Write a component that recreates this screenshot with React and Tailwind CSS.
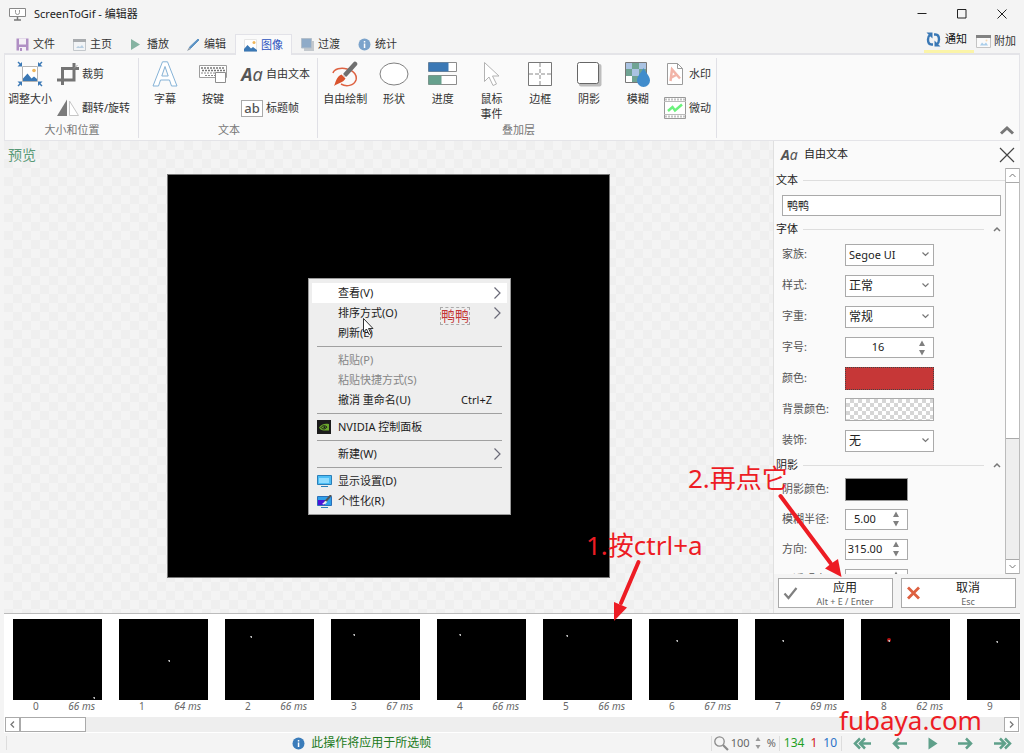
const Svg = ({ w = 24, h = 24, box, className = "", children }) => (
  <svg
    width={w}
    height={h}
    viewBox={box || `0 0 ${w} ${h}`}
    fill="none"
    className={`shrink-0 ${className}`}
    aria-hidden="true"
  >
    {children}
  </svg>
);

/* ---------- tab icons ---------- */

const SaveIcon = () => (
  <Svg w={13} h={13}>
    <path d="M0.5 0.5h12v12h-12z" fill="#b08fc4" />
    <path d="M3 0.5h7v6H3z" fill="#f4f0f6" />
    <path d="M3 9h7v4H3z" fill="#f4f0f6" />
    <path d="M4 10h2v3H4z" fill="#b08fc4" />
  </Svg>
);

const HomeIcon = () => (
  <Svg w={13} h={13}>
    <path d="M0.5 1.5h12v11h-12z" fill="#f2f4f6" stroke="#c4c8cc" />
    <path d="M0 1h13v3H0z" fill="#a8abae" />
    <path d="M3 10l2-2 2 1 2-2 2 3z" fill="#b9cfe2" />
  </Svg>
);

const PlaybackIcon = () => (
  <Svg w={13} h={13}>
    <path d="M1 1l9 5.500-9 5.500z" fill="#86b3a2" />
  </Svg>
);

const PencilIcon = () => (
  <Svg w={13} h={13}>
    <path d="M11 1l1 1-8.500 8.500-1.200-1.200z" fill="#5d93c4" stroke="#5d93c4" />
    <path d="M2 9.500L0 13l3.500-1.800z" fill="#8d9aa6" />
  </Svg>
);

const PictureIcon = () => (
  <Svg w={13} h={13}>
    <path d="M0.500 0.500h12v12h-12z" fill="#fff" stroke="#e6e6e6" />
    <path d="M0 12.500V10l3.500-4 3.500 3.500L9 8l4 3v1.500z" fill="#3a78b5" />
    <circle cx="10" cy="3.500" r="1.500" fill="#f0b65a" />
  </Svg>
);

const TransitionIcon = () => (
  <Svg w={13} h={13}>
    <path d="M3 3h10v10H3z" fill="#c3c8cd" />
    <path d="M0.500 0.500h10v9.500h-10z" fill="#8fabc8" stroke="#b4bfca" />
  </Svg>
);

const InfoIcon = ({ color = "#3b7cba" }) => (
  <Svg w={13} h={13}>
    <circle cx="6.500" cy="6.500" r="6" fill={color} />
    <path d="M5.800 5.500h1.500V10H5.800zM5.800 3h1.500v1.500H5.800z" fill="#fff" />
  </Svg>
);

/* ---------- ribbon icons ---------- */

const ResizeIcon = () => (
  <Svg w={26} h={26}>
    <path d="M5.500 5.500h15v15h-15z" fill="#fff" stroke="#b5b5b5" />
    <path d="M6 20v-2.500l4.500-5 4 5 2.500-2 3 2.500V20z" fill="#3a78b5" />
    <circle cx="17" cy="9.500" r="1.800" fill="#f0b65a" />
    <g fill="#3a78b5">
      <path d="M0.500 1.500l1-1 2 2L5 1v4.500H0.500L2.500 3.500z" />
      <path d="M25.500 1.500l-1-1-2 2L21 1v4.500h4.500l-2-2z" />
      <path d="M0.500 24.500l1 1 2-2L5 25v-4.500H0.500l2 2z" />
      <path d="M25.500 24.500l-1 1-2-2L21 25v-4.500h4.500l-2 2z" />
    </g>
  </Svg>
);

const CropIcon = () => (
  <Svg w={22} h={22}>
    <path d="M5.500 22V5.500H22M0 17h17V0" stroke="#747474" strokeWidth="3" />
    <path d="M17 5.500L20.500 2" stroke="#9a9a9a" />
  </Svg>
);

const FlipIcon = () => (
  <Svg w={22} h={18}>
    <path d="M10 0.500V17H0z" fill="#7b7b7b" />
    <path d="M12.500 2v14.500h9z" stroke="#c6c6c6" fill="#fff" />
  </Svg>
);

const LetterIcon = () => (
  <Svg w={26} h={26}>
    <path
      d="M10.500 0.800h5L25 25h-5.500l-2-6h-9l-2 6H1zM9.800 15h6.400L13 5.500z"
      fill="#fff"
      stroke="#85b2d6"
    />
  </Svg>
);

const KeyboardIcon = () => (
  <Svg w={28} h={26}>
    <path d="M0.500 4.500h27v12h-27z" fill="#fff" stroke="#9d9d9d" />
    <path d="M2 7h24M3 9.500h23" stroke="#777" strokeWidth="1.500" strokeDasharray="2 1" />
    <path d="M2 12h24M6 14.500h11" stroke="#888" strokeDasharray="2 1" />
    <path d="M16.500 11.500h10v10h-10z" fill="#fff" stroke="#8d8d8d" />
  </Svg>
);

const FreeTextIcon = ({ className = "text-[18px]" }) => (
  <span className={`w-[22px] shrink-0 font-bold italic leading-none text-[#555] ${className}`}>
    A<span className="font-normal">a</span>
  </span>
);

const TitleFrameIcon = () => (
  <span className="flex h-[17px] w-[22px] shrink-0 items-center justify-center border border-[#aaa] bg-white text-[13px] leading-none font-medium text-[#555]">
    ab
  </span>
);

const DrawIcon = () => (
  <Svg w={26} h={26}>
    <path
      d="M1 12C2 8 9 6 15 8c8 2 10 7 9 11-2 6-10 7-15 4"
      stroke="#de6242"
      strokeWidth="1.500"
    />
    <path d="M23 3L13.500 13.500" stroke="#6f6f6f" strokeWidth="4.500" strokeLinecap="round" />
    <path d="M9.500 13.500l4 4C11 22 6 22 2 25c2-4 2-9 7.500-11.500z" fill="#d9532d" />
    <path d="M10 12.500l4.500 4.500" stroke="#fff" />
  </Svg>
);

const EllipseIcon = () => (
  <Svg w={30} h={26}>
    <ellipse cx="15" cy="13" rx="14" ry="11" fill="#fff" stroke="#808080" />
  </Svg>
);

const ProgressIcon = () => (
  <Svg w={29} h={26}>
    <path d="M0.500 1.500h28v9h-28zM0.500 14.500h28v9h-28z" fill="#fff" stroke="#8c8c8c" />
    <path d="M0.500 1.500h20v9h-20z" fill="#3a78b5" />
    <path d="M0.500 14.500h13v9h-13z" fill="#66a08d" />
  </Svg>
);

const PointerIcon = () => (
  <Svg w={18} h={26}>
    <path
      d="M1.500 1.500v19l4.500-4.500 4 8.500 3.500-1.500-4-8h6.500z"
      fill="#fff"
      stroke="#b3b3b3"
    />
  </Svg>
);

const BorderIcon = () => (
  <Svg w={26} h={26}>
    <path d="M1.500 1.500h23v23h-23z" fill="#fff" stroke="#777" />
    <path d="M13 2v22M2 13h22" stroke="#888" strokeDasharray="4 2" />
  </Svg>
);

const ShadowIcon = () => (
  <Svg w={26} h={26}>
    <rect x="3" y="3" width="22.500" height="22.500" rx="2" fill="#bdbdbd" />
    <rect x="1.500" y="1.500" width="21" height="21" rx="2" fill="#fff" stroke="#666" />
  </Svg>
);

const BlurIcon = () => (
  <Svg w={26} h={26}>
    <path d="M0.500 1.500h21v20h-21z" fill="#fff" stroke="#777" />
    <path d="M1 2h6v6H1zM14 2h7v6h-7zM7 8h7v7H7z" fill="#aac3e2" />
    <path d="M7 2h7v6H7zM1 8h6v7H1zM7 15h7v6H7zM14 8h7v6h-7z" fill="#6fa393" />
    <path d="M18.500 7c2 4.500 6.500 8 6.500 12.500a6.500 6.500 0 01-13 0C12 15 16.500 11.500 18.500 7z" fill="#408ccc" />
  </Svg>
);

const WatermarkIcon = () => (
  <Svg w={22} h={22}>
    <path d="M3.500 0.500h10l5 5v16h-15z" fill="#fff" stroke="#9b9b9b" />
    <path d="M13.500 0.500v5h5" stroke="#9b9b9b" />
    <path d="M6.500 18L8 6.500l8 9M7.500 14.500l5.500-3" stroke="#f2b4a8" strokeWidth="2.500" />
  </Svg>
);

const CinemagraphIcon = () => (
  <Svg w={22} h={22}>
    <path d="M0.500 0.500h21v21h-21z" fill="#fff" stroke="#999" />
    <path d="M1.500 2.500h19M1.500 19.500h19" stroke="#888" strokeWidth="2" strokeDasharray="1 2" />
    <path d="M0 4.500h22M0 17.500h22" stroke="#bbb" />
    <path d="M4 14l4.500-4 2.500 3.500L18 7.500" stroke="#6bf27c" strokeWidth="2.500" />
  </Svg>
);

/* ---------- window chrome ---------- */

const TitleBar = () => (
  <header className="flex h-7 shrink-0 items-center pl-[9px] pr-[2px]">
    <Svg w={17} h={13}>
      <path d="M0.500 0.500h16v8h-16z" fill="#fff" stroke="#888" />
      <path d="M6.500 2v2.500a2 2 0 004 0V2" stroke="#999" />
      <path d="M8.500 9v3M5 12h7" stroke="#777" strokeWidth="1.500" />
    </Svg>
    <h1 className="ml-2 flex-1 text-[11px] text-[#222]">ScreenToGif - 编辑器</h1>
    <button aria-label="最小化" className="flex h-7 w-10 items-center justify-center">
      <Svg w={10} h={10}>
        <path d="M0.500 4.500h9" stroke="#222" />
      </Svg>
    </button>
    <button aria-label="最大化" className="flex h-7 w-10 items-center justify-center">
      <Svg w={10} h={10}>
        <path d="M0.500 0.500h8.500v8.500H0.500z" stroke="#222" />
      </Svg>
    </button>
    <button aria-label="关闭" className="flex h-7 w-10 items-center justify-center">
      <Svg w={10} h={10}>
        <path d="M0.500 0.500l9 9M9.500 0.500l-9 9" stroke="#222" />
      </Svg>
    </button>
  </header>
);

const tabs = [
  { label: "文件", icon: <SaveIcon /> },
  { label: "主页", icon: <HomeIcon /> },
  { label: "播放", icon: <PlaybackIcon /> },
  { label: "编辑", icon: <PencilIcon /> },
  { label: "图像", icon: <PictureIcon />, active: true },
  { label: "过渡", icon: <TransitionIcon /> },
  { label: "统计", icon: <InfoIcon color="#7ba3cb" /> },
];

const TabBar = () => (
  <nav className="flex h-[25px] shrink-0 items-end pl-[7px] pr-2 text-[11px] text-[#333]">
    {tabs.map((tab) => (
      <button
        key={tab.label}
        className={
          tab.active
            ? "z-10 -mb-[2px] flex h-[21px] w-[57px] items-center justify-center gap-1 border border-b-0 border-[#e2e2e8] bg-[#fafafa] text-[#2a52be]"
            : "flex h-[18px] w-[57px] items-center justify-center gap-1"
        }
      >
        {tab.icon}
        {tab.label}
      </button>
    ))}
    <button className="ml-auto flex h-[25px] w-[50px] items-center gap-1 border-b-[3px] border-[#fbf4a8] pl-[2px] text-[#111]">
      <Svg w={15} h={15}>
        <path
          d="M7 12.500H5.500C3.500 12.500 2 10.500 2 7.500 2 5.500 2.500 4 4 3"
          stroke="#3a78b5"
          strokeWidth="2.400"
        />
        <path
          d="M8 2.500h1.500c2 0 3.500 2 3.500 5 0 2-.500 3.500-2 4.500"
          stroke="#3a78b5"
          strokeWidth="2.400"
        />
        <path d="M0.500 0.500h6v6zM14.500 14.500h-6v-6z" fill="#3a78b5" />
      </Svg>
      通知
    </button>
    <button className="flex h-[23px] items-center gap-[3px] pl-[2px]">
      <Svg w={15} h={15}>
        <path d="M0.500 1.500h14v12h-14z" fill="#fafafa" stroke="#c4c4c4" />
        <path d="M0 1h15v3H0z" fill="#828282" />
        <path d="M4 11.500l2-3 2 2 2-2 2 3z" fill="#a9cdea" />
        <circle cx="10.500" cy="6.500" r="1" fill="#f7d9b0" />
      </Svg>
      附加
    </button>
  </nav>
);

const BigButton = ({ icon, children, className = "w-12" }) => (
  <button className={`flex flex-col items-center gap-1 ${className}`}>
    <span className="flex h-[26px] items-center justify-center">{icon}</span>
    <span className="text-[11px] leading-[15px] whitespace-nowrap">{children}</span>
  </button>
);

const SmallButton = ({ icon, children }) => (
  <button className="flex h-[26px] items-center gap-[3px] text-[11px] whitespace-nowrap">
    <span className="flex w-[22px] justify-center">{icon}</span>
    {children}
  </button>
);

const RibbonGroup = ({ title, className, children }) => (
  <section className={`mt-[3px] mb-[2px] flex flex-col border-r border-[#e0e0e6] ${className}`}>
    <div className="flex flex-1 items-start pt-[3px]">{children}</div>
    <h2 className="text-center text-[11px] leading-4 text-[#777]">{title}</h2>
  </section>
);

const Ribbon = () => (
  <div className="mx-1 flex h-[88px] shrink-0 border border-t-2 border-[#e4e4e8] bg-[#fafafa] text-[#333]">
    <RibbonGroup title="大小和位置" className="w-[134px] pl-px">
      <BigButton icon={<ResizeIcon />}>调整大小</BigButton>
      <div className="ml-[3px] flex flex-col gap-2">
        <SmallButton icon={<CropIcon />}>裁剪</SmallButton>
        <SmallButton icon={<FlipIcon />}>翻转/旋转</SmallButton>
      </div>
    </RibbonGroup>
    <RibbonGroup title="文本" className="w-[179px] pl-[2px]">
      <BigButton icon={<LetterIcon />}>字幕</BigButton>
      <BigButton icon={<KeyboardIcon />}>按键</BigButton>
      <div className="ml-1 flex flex-col gap-2">
        <SmallButton icon={<FreeTextIcon />}>自由文本</SmallButton>
        <SmallButton icon={<TitleFrameIcon />}>标题帧</SmallButton>
      </div>
    </RibbonGroup>
    <RibbonGroup title="叠加层" className="w-[399px] pl-[3px]">
      <BigButton className="flex-1" icon={<DrawIcon />}>自由绘制</BigButton>
      <BigButton className="flex-1" icon={<EllipseIcon />}>形状</BigButton>
      <BigButton className="flex-1" icon={<ProgressIcon />}>进度</BigButton>
      <BigButton className="flex-1" icon={<PointerIcon />}>
        鼠标
        <br />
        事件
      </BigButton>
      <BigButton className="flex-1" icon={<BorderIcon />}>边框</BigButton>
      <BigButton className="flex-1" icon={<ShadowIcon />}>阴影</BigButton>
      <BigButton className="flex-1" icon={<BlurIcon />}>模糊</BigButton>
      <div className="mr-[5px] ml-[2px] flex flex-col gap-2">
        <SmallButton icon={<WatermarkIcon />}>水印</SmallButton>
        <SmallButton icon={<CinemagraphIcon />}>微动</SmallButton>
      </div>
    </RibbonGroup>
    <button aria-label="折叠功能区" className="mt-auto mr-[3px] mb-1 ml-auto p-px">
      <Svg w={16} h={10}>
        <path d="M2 8.500l6-5.500 6 5.500" stroke="#777" strokeWidth="3" />
      </Svg>
    </button>
  </div>
);

/* ---------- preview ---------- */

const Separator = () => (
  <li role="separator" className="flex h-[7px] items-center px-[5px]">
    <span className="h-px w-full bg-[#a0a0a0]" />
  </li>
);

const MenuItem = ({ icon, shortcut, submenu, disabled, hover, children }) => (
  <li>
    <button
      disabled={disabled}
      className={`flex h-5 w-full items-center pr-[5px] pl-[5px] text-left text-[11px] ${
        hover ? "bg-white" : ""
      } ${disabled ? "text-[#868686]" : "text-[#1c1c1c]"}`}
    >
      <span className="w-[21px] shrink-0">{icon}</span>
      <span className="flex-1">{children}</span>
      {shortcut && <span className="mr-[10px]">{shortcut}</span>}
      {submenu && (
        <Svg w={8} h={12}>
          <path d="M0.500 0.500l5.500 5.500-5.500 5.500" stroke="#6a6a78" strokeWidth="1.200" />
        </Svg>
      )}
    </button>
  </li>
);

const ContextMenu = () => (
  <ul className="absolute top-[103px] left-[140px] w-[203px] border border-[#9a9a9a] bg-[#eee] px-[3px] pt-1 pb-[3px]">
    <MenuItem hover submenu>查看(V)</MenuItem>
    <MenuItem submenu>排序方式(O)</MenuItem>
    <MenuItem>刷新(E)</MenuItem>
    <Separator />
    <MenuItem disabled>粘贴(P)</MenuItem>
    <MenuItem disabled>粘贴快捷方式(S)</MenuItem>
    <MenuItem shortcut="Ctrl+Z">撤消 重命名(U)</MenuItem>
    <Separator />
    <MenuItem
      icon={
        <Svg w={14} h={14}>
          <path d="M0 0h14v14H0z" fill="#1b1b1b" />
          <path d="M2 7.500C4 4 8 3 12 4v6.500H7C4.500 10.500 3 9.500 2 7.500z" fill="#6aa82c" />
          <path d="M4 7.500c1.500-2 4-2.500 6-.500-1.500 2.500-4.500 2.500-6 .500z" stroke="#1b1b1b" />
          <circle cx="7.500" cy="7.300" r="1" fill="#1b1b1b" />
        </Svg>
      }
    >
      NVIDIA 控制面板
    </MenuItem>
    <Separator />
    <MenuItem submenu>新建(W)</MenuItem>
    <Separator />
    <MenuItem
      icon={
        <Svg w={15} h={12}>
          <path d="M0.500 0.500h14v9h-14z" fill="#4cbdf5" stroke="#2b7fb8" />
          <path d="M2 3h10v5H2z" fill="#8fdcff" />
          <path d="M4 11.500h7" stroke="#2b7fb8" />
        </Svg>
      }
    >
      显示设置(D)
    </MenuItem>
    <MenuItem
      icon={
        <Svg w={15} h={13}>
          <path d="M0.500 1.500h14v9h-14z" fill="#2f9fe8" stroke="#2b6fb8" />
          <path d="M1 5h7v5H1z" fill="#4a12d8" />
          <path d="M14 0L8 7" stroke="#555" strokeWidth="2" />
          <path d="M9 6c-2 0-2 2-4 3 2 1 4 0 5-2z" fill="#eee" />
          <path d="M4 12.500h7" stroke="#2b7fb8" />
        </Svg>
      }
    >
      个性化(R)
    </MenuItem>
  </ul>
);

const Preview = () => (
  <main className="relative flex min-w-0 flex-1 items-center justify-center bg-[repeating-conic-gradient(#f4f4f4_0_25%,#efefef_0_50%)] bg-[length:18px_18px] pb-[2px]">
    <h2 className="absolute top-1 left-1 text-[14px] leading-5 text-[#5a9a78]">预览</h2>
    <div className="relative h-[404px] w-[443px] shrink-0 border border-[#777] bg-black">
      <ContextMenu />
      <span className="absolute top-[132px] left-[272px] border border-dashed border-[#aaa] text-[14px] leading-[16px] text-[#c43636]">
        鸭鸭
      </span>
      <Svg w={12} h={18} className="absolute top-[143px] left-[195px]">
        <path d="M0.500 0.500v13.500l3-3 2.500 5.500 2-1-2.500-5h4.500z" fill="#fff" stroke="#333" />
      </Svg>
    </div>
  </main>
);

/* ---------- free text panel ---------- */

const SectionTitle = ({ children, collapsible }) => (
  <div className="mr-1 flex h-[18px] items-center gap-[5px] pl-[2px]">
    <h3 className="text-[11px] text-[#222]">{children}</h3>
    <span className="h-px flex-1 bg-[#dedede]" />
    {collapsible && (
      <button type="button" aria-label="折叠" className="ml-1 flex">
        <Svg w={8} h={6}>
          <path d="M1 5l3-3 3 3" stroke="#777" strokeWidth="1.500" />
        </Svg>
      </button>
    )}
  </div>
);

const Field = ({ id, label, className = "h-[31px]", children }) => (
  <div className={`flex items-center pl-2 ${className}`}>
    <label htmlFor={id} className="w-[63px] shrink-0 text-[11px] whitespace-nowrap text-[#555]">
      {label}:
    </label>
    {children}
  </div>
);

const Select = ({ id, value, className = "text-[12px]" }) => (
  <div className="relative">
    <select
      id={id}
      className={`block h-[22px] w-[89px] appearance-none border border-[#aaa] bg-white px-[3px] leading-5 text-[#222] ${className}`}
    >
      <option>{value}</option>
    </select>
    <Svg w={7} h={5} className="pointer-events-none absolute top-2 right-[5px]">
      <path d="M0.500 0.500l3 3 3-3" stroke="#777" strokeWidth="1.200" />
    </Svg>
  </div>
);

const Arrows = () => (
  <Svg w={8} h={16}>
    <path d="M4 0.500L7 6H1zM4 15.500L7 10H1z" fill="#808080" />
  </Svg>
);

const Spinner = ({ id, value, className }) => (
  <div className={`flex h-[21px] items-center border border-[#aaa] bg-white pr-[7px] ${className}`}>
    <input
      id={id}
      defaultValue={value}
      className="w-full min-w-0 flex-1 pr-2 text-center text-[11px] text-[#222] outline-none"
    />
    <Arrows />
  </div>
);

const FreeTextPanel = () => (
  <aside className="flex w-[247px] shrink-0 flex-col border-l border-[#e0e0e0] bg-[#fafafa]">
    <div className="flex h-[27px] shrink-0 items-center pr-[5px] pl-[7px]">
      <FreeTextIcon className="text-[14px]" />
      <h2 className="ml-px flex-1 text-[11px] text-[#222]">自由文本</h2>
      <button aria-label="关闭面板" className="flex">
        <Svg w={16} h={16}>
          <path d="M1 1l14 14M15 1L1 15" stroke="#444" strokeWidth="1.200" />
        </Svg>
      </button>
    </div>
    <div className="flex min-h-0 flex-1">
      <form className="min-w-0 flex-1 overflow-hidden pt-[3px]">
        <div className="-mr-1">
          <SectionTitle>文本</SectionTitle>
        </div>
        <input
          aria-label="文本"
          defaultValue="鸭鸭"
          className="mt-[6px] ml-2 h-[21px] w-[219px] border border-[#aaa] bg-white px-1 pb-[2px] text-[11px] text-[#222]"
        />
        <div className="mt-1">
          <SectionTitle collapsible>字体</SectionTitle>
        </div>
        <div className="pt-px">
          <Field id="family" label="家族">
            <Select id="family" value="Segoe UI" className="text-[11px]" />
          </Field>
          <Field id="style" label="样式">
            <Select id="style" value="正常" />
          </Field>
          <Field id="weight" label="字重">
            <Select id="weight" value="常规" />
          </Field>
          <Field id="size" label="字号">
            <Spinner id="size" value="16" className="w-[89px]" />
          </Field>
          <Field id="color" label="颜色">
            <button
              id="color"
              type="button"
              className="h-[23px] w-[89px] border border-dotted border-[#444] bg-[#c63737]"
            />
          </Field>
          <Field id="background" label="背景颜色">
            <button
              id="background"
              type="button"
              className="h-[23px] w-[89px] border border-[#aaa] bg-[repeating-conic-gradient(#d6d6d6_0_25%,#fff_0_50%)] bg-[length:8px_8px]"
            />
          </Field>
          <Field id="decoration" label="装饰">
            <Select id="decoration" value="无" />
          </Field>
        </div>
        <SectionTitle collapsible>阴影</SectionTitle>
        <Field id="shadow-color" label="阴影颜色" className="h-[30px]">
          <button
            id="shadow-color"
            type="button"
            className="h-[23px] w-[63px] border border-[#999] bg-black"
          />
        </Field>
        <Field id="radius" label="模糊半径" className="h-[30px]">
          <Spinner id="radius" value="5.00" className="w-[63px]" />
        </Field>
        <Field id="direction" label="方向" className="h-[30px]">
          <Spinner id="direction" value="315.00" className="w-[63px]" />
        </Field>
        <Field id="opacity" label="不透明度" className="h-[30px]">
          <Spinner id="opacity" value="100" className="w-[63px]" />
        </Field>
      </form>
      <div className="flex w-[15px] flex-col border-x border-[#bbb] bg-[#eee]">
        <button aria-label="向上滚动" className="flex h-[15px] items-center justify-center border-y border-[#aaa] bg-white">
          <Svg w={7} h={5}>
            <path d="M0.500 4l3-3 3 3" stroke="#777" />
          </Svg>
        </button>
        <div className="h-[256px] border-b border-[#aaa] bg-white" />
        <button aria-label="向下滚动" className="mt-auto flex h-[15px] items-center justify-center border-y border-[#aaa] bg-white">
          <Svg w={7} h={5}>
            <path d="M0.500 1l3 3 3-3" stroke="#777" />
          </Svg>
        </button>
      </div>
    </div>
    <div className="grid shrink-0 grid-cols-2 gap-2 bg-[#f4f4f4] px-1 pt-1 pb-[5px]">
      <button className="flex h-[30px] items-center border border-[#aaa] bg-white pl-1">
        <Svg w={15} h={14}>
          <path d="M1.500 7.500l4 4.500L13.500 2" stroke="#808080" strokeWidth="2.200" />
        </Svg>
        <span className="flex flex-1 flex-col pt-px">
          <span className="text-[12px] leading-4 text-[#222]">应用</span>
          <span className="text-[9px] leading-3 text-[#666]">Alt + E / Enter</span>
        </span>
      </button>
      <button className="flex h-[30px] items-center border border-[#aaa] bg-white pl-1">
        <Svg w={15} h={14}>
          <path d="M2 1.500l11 11M13 1.500l-11 11" stroke="#dd6040" strokeWidth="2.800" />
        </Svg>
        <span className="flex flex-1 flex-col pt-px">
          <span className="text-[12px] leading-4 text-[#222]">取消</span>
          <span className="text-[9px] leading-3 text-[#666]">Esc</span>
        </span>
      </button>
    </div>
  </aside>
);

/* ---------- frame list ---------- */

const frames = [
  { delay: 66, x: 81, y: 79 },
  { delay: 64, x: 50, y: 42 },
  { delay: 66, x: 26, y: 18 },
  { delay: 67, x: 23, y: 16 },
  { delay: 66, x: 23, y: 16 },
  { delay: 66, x: 24, y: 17 },
  { delay: 67, x: 28, y: 22 },
  { delay: 69, x: 28, y: 22 },
  { delay: 62, x: 28, y: 22, marked: true },
  { delay: 66, x: 30, y: 23 },
];

const FrameList = () => (
  <section className="mx-1 shrink-0 border-t border-[#bbb] bg-white">
    <ol className="flex h-[103px] gap-[17px] overflow-hidden pt-[5px] pl-[9px]">
      {frames.map((frame, i) => (
        <li key={i} className="w-[89px] shrink-0">
          <Svg w={89} h={81} className="bg-black">
            {frame.marked && <circle cx={frame.x} cy={frame.y - 1} r="2" fill="#b51414" />}
            <path d={`M${frame.x - 1} ${frame.y - 1}h2v2h-1z`} fill="#bbb" />
          </Svg>
          <div className="flex justify-between pr-[7px] pl-5 text-[10px] leading-[13px] text-[#666]">
            <span>{i}</span>
            <span className="italic">{frame.delay} ms</span>
          </div>
        </li>
      ))}
    </ol>
    <div className="mx-px mb-px flex h-[15px] bg-[#eee]">
      <button aria-label="向左滚动" className="flex w-[15px] items-center justify-center border border-[#aaa] bg-white">
        <Svg w={5} h={7}>
          <path d="M4 0.500l-3 3 3 3" stroke="#777" strokeWidth="1.300" />
        </Svg>
      </button>
      <div className="w-[66px] border border-[#aaa] bg-white" />
      <button aria-label="向右滚动" className="ml-auto flex w-[15px] items-center justify-center border border-[#aaa] bg-white">
        <Svg w={5} h={7}>
          <path d="M1 0.500l3 3-3 3" stroke="#777" strokeWidth="1.300" />
        </Svg>
      </button>
    </div>
  </section>
);

const navIcons = [
  { label: "第一帧", w: 18, d: "M7 1.500L2 6.500l5 5M12 1.500L7 6.500l5 5M7.500 6.500H18" },
  { label: "上一帧", w: 15, d: "M7 1.500L2 6.500l5 5M2.500 6.500H15" },
  { label: "播放", play: true },
  { label: "下一帧", w: 15, d: "M8 1.500l5 5-5 5M12.500 6.500H0" },
  { label: "最后一帧", w: 18, d: "M11 1.500l5 5-5 5M6 1.500l5 5-5 5M10.500 6.500H0" },
];

const StatusBar = () => (
  <footer className="flex h-5 shrink-0 items-center pr-3 pl-[6px] text-[#666]">
    <span className="h-[14px] w-px bg-[#ddd]" />
    <p className="flex flex-1 items-center justify-center gap-[6px] pl-[6px] text-[12px] text-[#217a21]">
      <InfoIcon />
      此操作将应用于所选帧
    </p>
    <div className="flex h-[15px] items-center border-l border-[#ddd] pl-[2px] text-[11px]">
      <Svg w={15} h={15}>
        <circle cx="5.500" cy="5.500" r="4.700" stroke="#8a8a8a" strokeWidth="1.300" />
        <path d="M9 9l5 5" stroke="#8a8a8a" strokeWidth="2.200" />
      </Svg>
      <input
        aria-label="缩放"
        defaultValue="100"
        className="ml-[2px] w-6 outline-none"
      />
      <Svg w={6} h={14}>
        <path d="M3 1l2.500 4h-5zM3 13l2.500-4h-5z" fill="#999" />
      </Svg>
      <span className="ml-[6px]">%</span>
    </div>
    <div className="ml-[3px] flex h-[15px] items-center gap-[6px] border-x border-[#ddd] px-1 text-[12px]">
      <span className="text-[#1fa01f]">134</span>
      <span className="text-[#d01818]">1</span>
      <span className="text-[#2a72c8]">10</span>
    </div>
    <div className="ml-[11px] flex w-[159px] justify-between">
      {navIcons.map((item) => (
        <button key={item.label} aria-label={item.label} className="flex">
          {item.play ? (
            <Svg w={10} h={13}>
              <path d="M0.500 0.500l9 6-9 6z" fill="#5fa08a" />
            </Svg>
          ) : (
            <Svg w={item.w} h={13}>
              <path d={item.d} stroke="#5fa08a" strokeWidth="2.500" />
            </Svg>
          )}
        </button>
      ))}
    </div>
  </footer>
);

/* notes drawn over the window */
const Annotations = () => (
  <div className="pointer-events-none absolute inset-0 z-20 overflow-hidden text-[26px] leading-8 whitespace-nowrap text-[#ed1c24]">
    <p className="absolute top-[529px] left-[586px]">1.按ctrl+a</p>
    <p className="absolute top-[462px] left-[688px]">2.再点它</p>
    <p className="absolute top-[704px] left-[839px]">fubaya.com</p>
    <Svg w={260} h={140} className="absolute top-[485px] left-[600px]">
      <path d="M38.500 77L21 118" stroke="#ed1c24" strokeWidth="4" strokeLinecap="round" />
      <path d="M14 136V117l6 2.500 7 3z" fill="#ed1c24" />
      <path d="M180.500 11l50 67" stroke="#ed1c24" strokeWidth="4" strokeLinecap="round" />
      <path d="M241.500 92l-16.500-8.500 5.500-4.500 7.500-5z" fill="#ed1c24" />
    </Svg>
  </div>
);

const App = () => {
  return (
    <div className="relative flex h-screen flex-col overflow-hidden bg-[#f4f4f4] font-['Noto_Sans','Noto_Sans_CJK_SC',sans-serif]">
      <TitleBar />
      <TabBar />
      <Ribbon />
      <div className="mx-1 flex min-h-0 flex-1">
        <Preview />
        <FreeTextPanel />
      </div>
      <FrameList />
      <StatusBar />
      <Annotations />
    </div>
  );
};

export default App;
